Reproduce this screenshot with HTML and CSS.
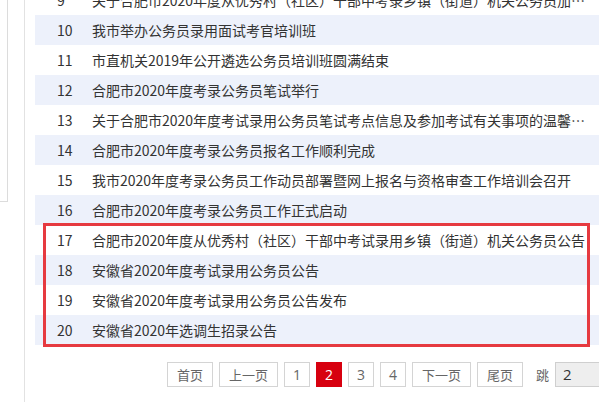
FILE: index.html
```html
<!DOCTYPE html>
<html lang="zh-CN">
<head>
<meta charset="utf-8">
<title>公务员考录</title>
<link rel="stylesheet" href="styles.css">
</head>
<body>
<div class="page">
  <div class="side"></div>
  <div class="main">
    <ul class="list">
      <li class="row"><span class="num">9</span><span class="title">关于合肥市2020年度从优秀村（社区）干部中考录乡镇（街道）机关公务员加…</span></li>
      <li class="row alt"><span class="num">10</span><span class="title">我市举办公务员录用面试考官培训班</span></li>
      <li class="row"><span class="num">11</span><span class="title">市直机关2019年公开遴选公务员培训班圆满结束</span></li>
      <li class="row alt"><span class="num">12</span><span class="title">合肥市2020年度考录公务员笔试举行</span></li>
      <li class="row"><span class="num">13</span><span class="title">关于合肥市2020年度考试录用公务员笔试考点信息及参加考试有关事项的温馨…</span></li>
      <li class="row alt"><span class="num">14</span><span class="title">合肥市2020年度考录公务员报名工作顺利完成</span></li>
      <li class="row"><span class="num">15</span><span class="title">我市2020年度考录公务员工作动员部署暨网上报名与资格审查工作培训会召开</span></li>
      <li class="row alt"><span class="num">16</span><span class="title">合肥市2020年度考录公务员工作正式启动</span></li>
      <li class="group">
        <ul class="sublist">
          <li class="row"><span class="num">17</span><span class="title">合肥市2020年度从优秀村（社区）干部中考试录用乡镇（街道）机关公务员公告</span></li>
          <li class="row alt"><span class="num">18</span><span class="title">安徽省2020年度考试录用公务员公告</span></li>
          <li class="row"><span class="num">19</span><span class="title">安徽省2020年度考试录用公务员公告发布</span></li>
          <li class="row alt"><span class="num">20</span><span class="title">安徽省2020年选调生招录公告</span></li>
        </ul>
        <div class="highlight"></div>
      </li>
    </ul>
    <div class="pager">
      <a class="btn">首页</a>
      <a class="btn">上一页</a>
      <a class="btn page-num">1</a>
      <a class="btn page-num current">2</a>
      <a class="btn page-num">3</a>
      <a class="btn page-num">4</a>
      <a class="btn">下一页</a>
      <a class="btn">尾页</a>
      <span class="jump">跳</span>
      <span class="jump-input">2</span>
    </div>
  </div>
</div>
</body>
</html>
```
FILE: styles.css
```css
html, body {
  margin: 0;
  padding: 0;
  background: #ffffff;
  overflow: hidden;
}
body {
  font-family: "Noto Sans CJK SC", "Noto Sans", sans-serif;
  color: #333333;
  width: 599px;
  height: 402px;
}
.page {
  display: flex;
  align-items: flex-start;
  height: 402px;
}
.side {
  width: 8px;
  height: 202px;
  border-right: 1px solid #dcdcdc;
  border-bottom: 1px solid #dcdcdc;
  box-sizing: border-box;
  flex: none;
}
.main {
  margin-left: 16px;
  border-left: 1px solid #e2e2e2;
  height: 402px;
  padding-left: 10px;
  width: 680px;
  flex: none;
}
.list, .sublist {
  list-style: none;
  margin: 0;
  padding: 0;
}
.list {
  margin-top: -15px;
  width: 650px;
}
.row {
  display: flex;
  height: 30px;
  line-height: 30px;
  font-size: 14px;
}
.row.alt {
  background: #edf1fb;
}
.num {
  width: 57px;
  padding-left: 22px;
  box-sizing: border-box;
  flex: none;
}
.title {
  width: 500px;
  white-space: nowrap;
  overflow: hidden;
}
.group {
  position: relative;
}
.highlight {
  position: absolute;
  left: 8px;
  top: -2px;
  width: 547px;
  height: 124px;
  border: 3px solid #e63a40;
  box-sizing: border-box;
}
.pager {
  display: flex;
  align-items: center;
  gap: 6px;
  margin-top: 17px;
  padding-left: 132px;
  font-size: 13px;
}
.btn {
  display: block;
  height: 25px;
  line-height: 23px;
  padding: 0 9px;
  border: 1px solid #d4d4d4;
  box-sizing: border-box;
  color: #666666;
  background: #ffffff;
}
.page-num {
  width: 26px;
  padding: 0;
  text-align: center;
  font-family: "Open Sans", "Noto Sans", sans-serif;
  font-size: 14px;
}
.current {
  background: #d7000f;
  border-color: #d7000f;
  color: #ffffff;
}
.jump {
  margin-left: 7px;
  color: #666666;
}
.jump-input {
  display: block;
  height: 25px;
  line-height: 23px;
  width: 60px;
  box-sizing: border-box;
  border: 1px solid #cfcfcf;
  background: #eeeeee;
  padding-left: 7px;
  color: #333333;
  font-family: "Open Sans", "Noto Sans", sans-serif;
  font-size: 15px;
}
```
